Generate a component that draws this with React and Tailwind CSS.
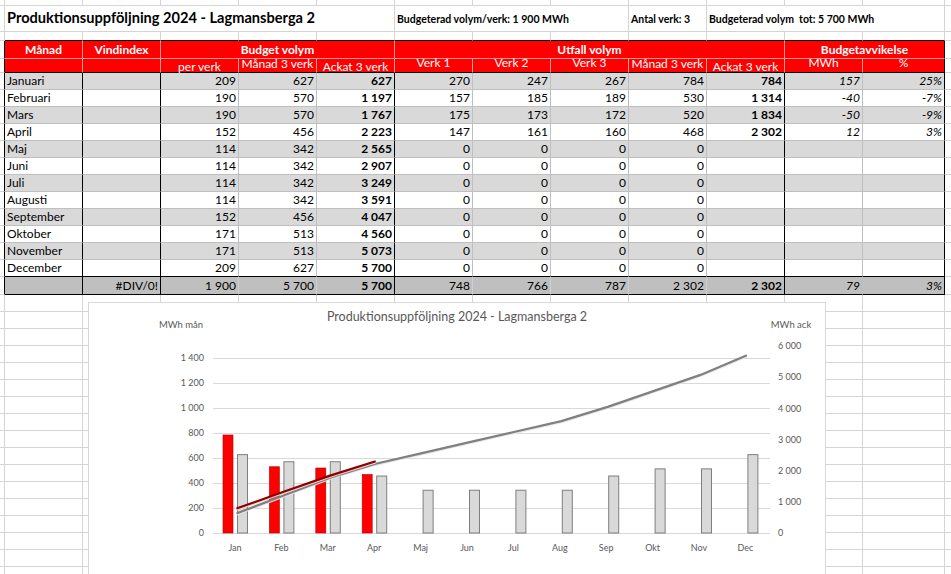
import React from "react";

const months = ["Januari", "Februari", "Mars", "April", "Maj", "Juni", "Juli", "Augusti", "September", "Oktober", "November", "December"];
const short = ["Jan", "Feb", "Mar", "Apr", "Maj", "Jun", "Jul", "Aug", "Sep", "Okt", "Nov", "Dec"];
const perVerk = [209, 190, 190, 152, 114, 114, 114, 114, 152, 171, 171, 209];
const manad = perVerk.map((v) => v * 3);
const ackat = manad.reduce((acc, v, i) => [...acc, (acc[i - 1] || 0) + v], []);
const verk1 = [270, 157, 175, 147, 0, 0, 0, 0, 0, 0, 0, 0];
const verk2 = [247, 185, 173, 161, 0, 0, 0, 0, 0, 0, 0, 0];
const verk3 = [267, 189, 172, 160, 0, 0, 0, 0, 0, 0, 0, 0];
const utfall = [784, 530, 520, 468, 0, 0, 0, 0, 0, 0, 0, 0];
const utfallAck = [784, 1314, 1834, 2302];
const avvik = [157, -40, -50, 12];
const avvikPct = ["25%", "-7%", "-9%", "3%"];

const fmt = (n) => String(n).replace(/\B(?=(\d{3})+(?!\d))/g, "\u00a0");

const W = ["w-[5px]", "w-[78px]", "w-[78px]", "w-[78px]", "w-[78px]", "w-[78px]", "w-[78px]", "w-[78px]", "w-[78px]", "w-[78px]", "w-[78px]", "w-[78px]", "w-[82px]"];

const Cell = ({ className = "", children }) => (
  <div className={`shrink-0 h-full border-r border-b flex items-center whitespace-nowrap leading-none ${className}`}>
    {children}
  </div>
);

const EmptyRow = ({ h }) => (
  <div className={`flex ${h}`}>
    {W.map((w, i) => (
      <Cell key={i} className={`${w} border-r-[#d4d4d4] border-b-[#d4d4d4]`} />
    ))}
    <Cell className="grow border-r-0 border-b-[#d4d4d4]" />
  </div>
);

// Chart geometry, page coordinates
const cx = (i) => 236.5 + 46.4 * i;
const yL = (v) => 533 - v * 0.125;
const yR = (v) => 533 - (v * 187) / 6000;

const Chart = () => (
  <div className="absolute left-[88px] top-[302px] w-[738px] h-[300px] bg-white border border-[#d9d9d9]">
    <svg width="738" height="300" viewBox="88 302 738 300" className="absolute -left-px -top-px block">
      <g fontFamily="Lato, sans-serif" fill="#595959">
        <text x="457" y="321" fontSize="12.5" textAnchor="middle">Produktionsuppföljning 2024 - Lagmansberga 2</text>
        <text x="181" y="327.5" fontSize="9.5" textAnchor="middle">MWh mån</text>
        <text x="791" y="327.5" fontSize="9.5" textAnchor="middle">MWh ack</text>
        {[0, 1, 2, 3, 4, 5, 6, 7].map((k) => (
          <text key={k} x="204" y={533 - 25 * k + 3.2} fontSize="9" textAnchor="end">{fmt(200 * k)}</text>
        ))}
        {[0, 1, 2, 3, 4, 5, 6].map((k) => (
          <text key={k} x="778" y={yR(k * 1000) + 3.2} fontSize="9">{fmt(k * 1000)}</text>
        ))}
        {short.map((m, i) => (
          <text key={m} x={cx(i) - 1.5} y="551" fontSize="9" textAnchor="middle">{m}</text>
        ))}
      </g>
      {[0, 1, 2, 3, 4, 5, 6, 7].map((k) => (
        <line key={k} x1="213" x2="770" y1={533.5 - 25 * k} y2={533.5 - 25 * k} stroke="#d9d9d9" />
      ))}
      {utfallAck.map((_, i) => (
        <rect key={i} x={cx(i) - 13.5} y={yL(utfall[i])} width="10" height={533 - yL(utfall[i])} fill="#ff0000" stroke="#b00000" strokeWidth="0.6" />
      ))}
      {manad.map((v, i) => (
        <rect key={i} x={cx(i) + 1} y={yL(v)} width="10" height={533 - yL(v)} fill="#d9d9d9" stroke="#7f7f7f" strokeWidth="1" />
      ))}
      <polyline points={ackat.map((v, i) => `${cx(i)},${yR(v) + 1.2}`).join(" ")} fill="none" stroke="#e8e8e8" strokeWidth="2" />
      <polyline points={ackat.map((v, i) => `${cx(i)},${yR(v)}`).join(" ")} fill="none" stroke="#808080" strokeWidth="2.2" />
      <polyline points={utfallAck.map((v, i) => `${cx(i)},${yR(v) + 1.2}`).join(" ")} fill="none" stroke="#f2d0d0" strokeWidth="2" />
      <polyline points={utfallAck.map((v, i) => `${cx(i)},${yR(v)}`).join(" ")} fill="none" stroke="#8e0000" strokeWidth="2.2" />
    </svg>
  </div>
);

const HL = "border-r-[#ff9a9a]";

export default function App() {
  return (
    <div className="relative h-[574px] w-[951px] overflow-hidden bg-white text-[12px] text-black font-[family-name:Lato,sans-serif]">
      <EmptyRow h="h-[6px]" />

      {/* Title row */}
      <div className="flex h-[26px]">
        <Cell className="w-[5px] border-r-[#d4d4d4] border-b-[#d4d4d4]" />
        <Cell className="w-[390px] border-r-[#d4d4d4] border-b-[#d4d4d4] pl-[2px] text-[14.6px] font-bold">
          Produktionsuppföljning 2024 - Lagmansberga 2
        </Cell>
        <Cell className="w-[234px] border-r-[#d4d4d4] border-b-[#d4d4d4] pl-[2px] pt-[2px] text-[10.5px] font-bold">
          Budgeterad volym/verk: 1&nbsp;900 MWh
        </Cell>
        <Cell className="w-[78px] border-r-[#d4d4d4] border-b-[#d4d4d4] pl-[2px] pt-[2px] text-[10.5px] font-bold">
          Antal verk: 3
        </Cell>
        <Cell className="w-[238px] border-r-[#d4d4d4] border-b-[#d4d4d4] pl-[2px] pt-[2px] text-[10.5px] font-bold">
          Budgeterad volym&nbsp; tot: 5&nbsp;700 MWh
        </Cell>
        <Cell className="grow border-r-0 border-b-[#d4d4d4]" />
      </div>

      {/* Spacer row, bottom edge is table top */}
      <div className="flex h-[9px]">
        {W.map((w, i) => (
          <Cell key={i} className={`${w} border-r-[#d4d4d4] ${i === 0 ? "border-b-[#d4d4d4]" : "border-b-black"}`} />
        ))}
        <Cell className="grow border-r-0 border-b-[#d4d4d4]" />
      </div>

      {/* Header row 1 */}
      <div className="flex h-[18px] text-white font-bold text-[12px]">
        <Cell className="w-[5px] border-r-black border-b-[#d4d4d4]" />
        <Cell className={`w-[78px] bg-[#ff0000] ${HL} border-b-[#ff9a9a] justify-center`}>Månad</Cell>
        <Cell className={`w-[78px] bg-[#ff0000] ${HL} border-b-[#ff9a9a] justify-center`}>Vindindex</Cell>
        <Cell className={`w-[234px] bg-[#ff0000] ${HL} border-b-[#ff9a9a] justify-center`}>Budget volym</Cell>
        <Cell className={`w-[390px] bg-[#ff0000] ${HL} border-b-[#ff9a9a] justify-center`}>Utfall volym</Cell>
        <Cell className="w-[160px] bg-[#ff0000] border-r-black border-b-[#ff9a9a] justify-center">Budgetavvikelse</Cell>
        <Cell className="grow border-r-0 border-b-[#d4d4d4]" />
      </div>

      {/* Header row 2 */}
      <div className="flex h-[14px] text-white text-[12px]">
        <Cell className="w-[5px] border-r-black border-b-[#d4d4d4]" />
        <Cell className={`w-[78px] bg-[#ff0000] ${HL} border-b-black`} />
        <Cell className={`w-[78px] bg-[#ff0000] ${HL} border-b-black`} />
        <Cell className={`w-[78px] bg-[#ff0000] ${HL} border-b-black justify-center pt-[2px]`}>per verk</Cell>
        <Cell className={`w-[78px] bg-[#ff0000] ${HL} border-b-black justify-center pb-[3px]`}>Månad 3 verk</Cell>
        <Cell className={`w-[78px] bg-[#ff0000] ${HL} border-b-black justify-center pt-[2px]`}>Ackat 3 verk</Cell>
        <Cell className={`w-[78px] bg-[#ff0000] ${HL} border-b-black justify-center pb-[5px]`}>Verk 1</Cell>
        <Cell className={`w-[78px] bg-[#ff0000] ${HL} border-b-black justify-center pb-[5px]`}>Verk 2</Cell>
        <Cell className={`w-[78px] bg-[#ff0000] ${HL} border-b-black justify-center pb-[5px]`}>Verk 3</Cell>
        <Cell className={`w-[78px] bg-[#ff0000] ${HL} border-b-black justify-center pb-[3px]`}>Månad 3 verk</Cell>
        <Cell className={`w-[78px] bg-[#ff0000] ${HL} border-b-black justify-center pt-[2px]`}>Ackat 3 verk</Cell>
        <Cell className={`w-[78px] bg-[#ff0000] ${HL} border-b-black justify-center pb-[5px]`}>MWh</Cell>
        <Cell className="w-[82px] bg-[#ff0000] border-r-black border-b-black justify-center pb-[5px]">%</Cell>
        <Cell className="grow border-r-0 border-b-[#d4d4d4]" />
      </div>

      {/* Month rows */}
      {months.map((m, i) => {
        const bg = i % 2 === 0 ? "bg-[#d9d9d9]" : "bg-white";
        const bb = i === 11 ? "border-b-black" : "border-b-[#bfbfbf]";
        const num = `${bg} ${bb} justify-end pr-[2px]`;
        const has = i < 4;
        return (
          <div key={m} className="flex h-[17px]">
            <Cell className="w-[5px] border-r-black border-b-[#d4d4d4]" />
            <Cell className={`w-[78px] ${bg} ${bb} border-r-black pl-[2px]`}>{m}</Cell>
            <Cell className={`w-[78px] ${bg} ${bb} border-r-black`} />
            <Cell className={`w-[78px] ${num} border-r-[#bfbfbf]`}>{perVerk[i]}</Cell>
            <Cell className={`w-[78px] ${num} border-r-[#bfbfbf]`}>{manad[i]}</Cell>
            <Cell className={`w-[78px] ${num} border-r-black font-bold`}>{fmt(ackat[i])}</Cell>
            <Cell className={`w-[78px] ${num} border-r-[#bfbfbf]`}>{verk1[i]}</Cell>
            <Cell className={`w-[78px] ${num} border-r-[#bfbfbf]`}>{verk2[i]}</Cell>
            <Cell className={`w-[78px] ${num} border-r-[#bfbfbf]`}>{verk3[i]}</Cell>
            <Cell className={`w-[78px] ${num} border-r-[#bfbfbf]`}>{utfall[i]}</Cell>
            <Cell className={`w-[78px] ${num} border-r-black font-bold`}>{has ? fmt(utfallAck[i]) : ""}</Cell>
            <Cell className={`w-[78px] ${num} border-r-[#bfbfbf] italic`}>{has ? avvik[i] : ""}</Cell>
            <Cell className={`w-[82px] ${num} border-r-black italic`}>{has ? avvikPct[i] : ""}</Cell>
            <Cell className="grow border-r-0 border-b-[#d4d4d4]" />
          </div>
        );
      })}

      {/* Total row */}
      <div className="flex h-[18px]">
        <Cell className="w-[5px] border-r-black border-b-[#d4d4d4]" />
        <Cell className="w-[78px] bg-[#bfbfbf] border-b-black border-r-black" />
        <Cell className="w-[78px] bg-[#bfbfbf] border-b-black border-r-black justify-end pr-[2px]">#DIV/0!</Cell>
        <Cell className="w-[78px] bg-[#bfbfbf] border-b-black border-r-[#d0d0d0] justify-end pr-[2px]">1&nbsp;900</Cell>
        <Cell className="w-[78px] bg-[#bfbfbf] border-b-black border-r-[#d0d0d0] justify-end pr-[2px]">5&nbsp;700</Cell>
        <Cell className="w-[78px] bg-[#bfbfbf] border-b-black border-r-black justify-end pr-[2px] font-bold">5&nbsp;700</Cell>
        <Cell className="w-[78px] bg-[#bfbfbf] border-b-black border-r-[#d0d0d0] justify-end pr-[2px]">748</Cell>
        <Cell className="w-[78px] bg-[#bfbfbf] border-b-black border-r-[#d0d0d0] justify-end pr-[2px]">766</Cell>
        <Cell className="w-[78px] bg-[#bfbfbf] border-b-black border-r-[#d0d0d0] justify-end pr-[2px]">787</Cell>
        <Cell className="w-[78px] bg-[#bfbfbf] border-b-black border-r-[#d0d0d0] justify-end pr-[2px]">2&nbsp;302</Cell>
        <Cell className="w-[78px] bg-[#bfbfbf] border-b-black border-r-black justify-end pr-[2px] font-bold">2&nbsp;302</Cell>
        <Cell className="w-[78px] bg-[#bfbfbf] border-b-black border-r-[#bfbfbf] justify-end pr-[2px] italic">79</Cell>
        <Cell className="w-[82px] bg-[#bfbfbf] border-b-black border-r-black justify-end pr-[2px] italic">3%</Cell>
        <Cell className="grow border-r-0 border-b-[#d4d4d4]" />
      </div>

      {/* Empty sheet below */}
      {Array.from({ length: 17 }).map((_, i) => (
        <EmptyRow key={i} h="h-[17px]" />
      ))}

      <Chart />
    </div>
  );
}
